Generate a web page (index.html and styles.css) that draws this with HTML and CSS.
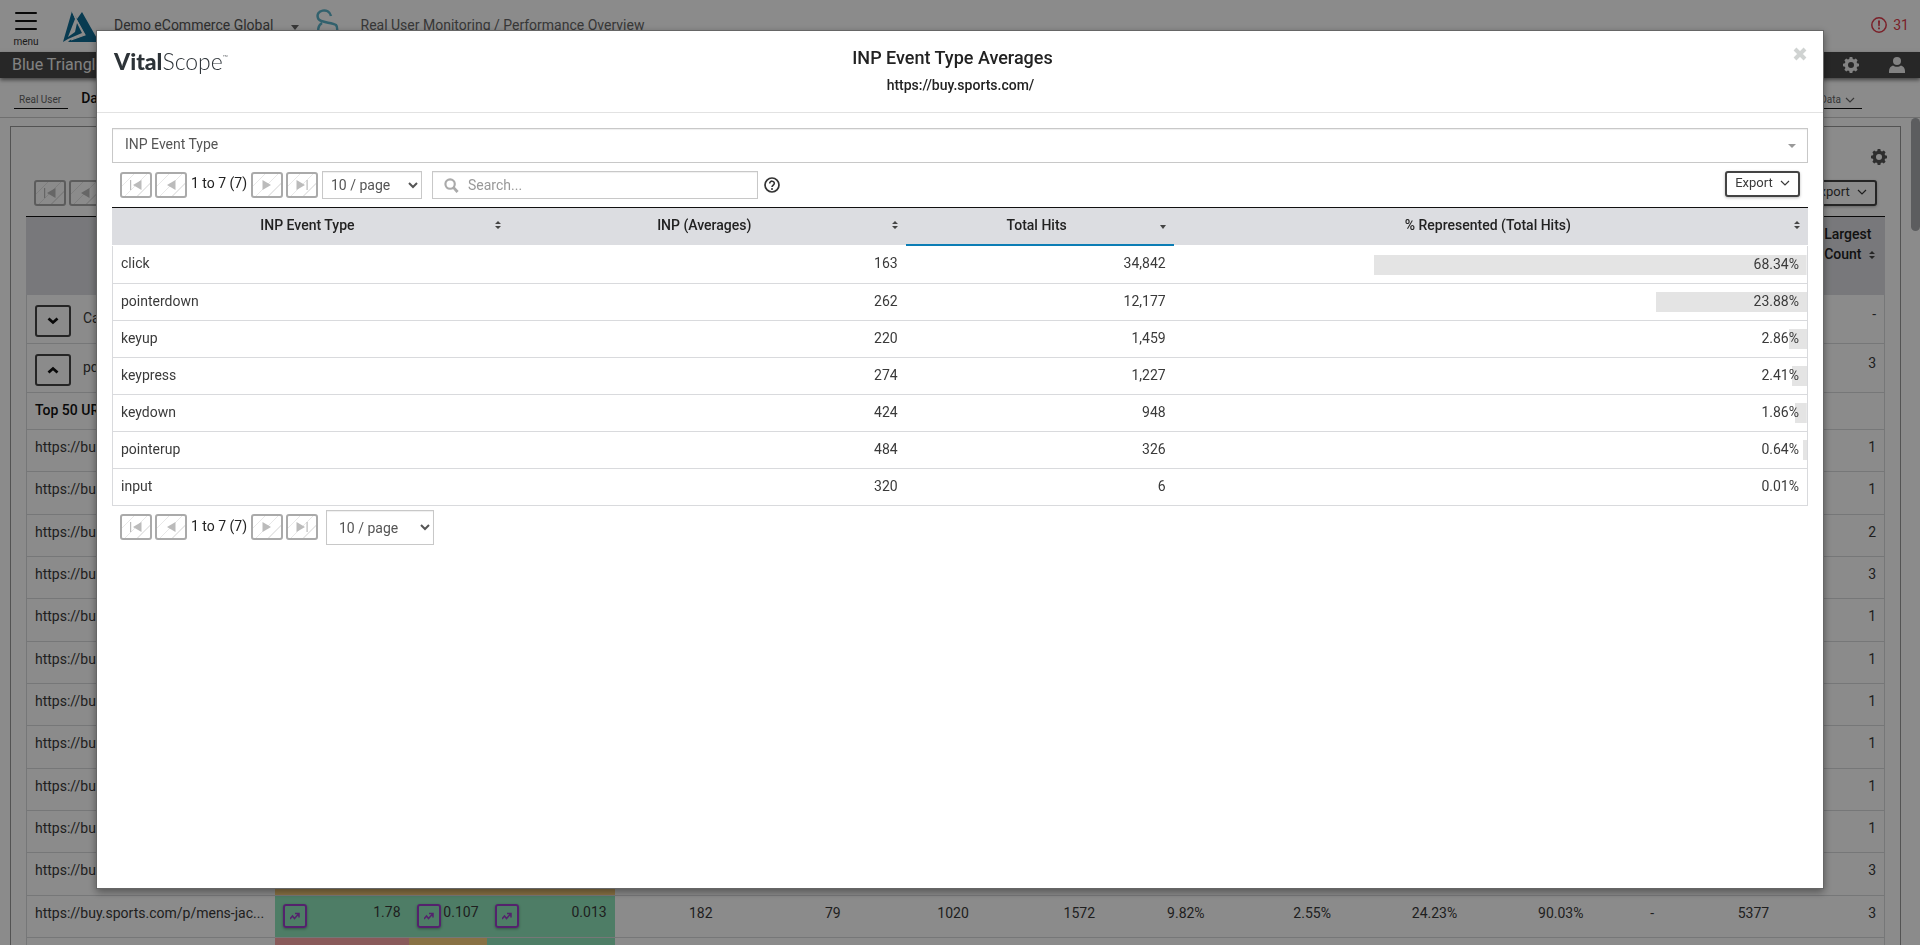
FILE: index.html
```html
<!DOCTYPE html>
<html lang="en">
<head>
<meta charset="utf-8">
<title>Performance Overview</title>
<link rel="stylesheet" href="styles.css">
</head>
<body>
<svg class="sprite" aria-hidden="true">
  <symbol id="first" viewBox="0 0 14 12"><path d="M1 1v10h1.200V1zM12.500 1v10L4 6z"/></symbol>
  <symbol id="prev" viewBox="0 0 14 12"><path d="M11.500 1v10L3 6z"/></symbol>
  <symbol id="next" viewBox="0 0 14 12"><path d="M2.500 1v10L11 6z"/></symbol>
  <symbol id="last" viewBox="0 0 14 12"><path d="M1.500 1v10L10 6zM11.500 1v10h1.200V1z"/></symbol>
  <symbol id="sort" viewBox="0 0 6 8"><path d="M3 0l3 3H0zM3 8l3-3H0z"/></symbol>
  <symbol id="chevron" viewBox="0 0 10 6"><path d="M1 1l4 4 4-4" fill="none" stroke="currentColor" stroke-width="1.200"/></symbol>
  <symbol id="fold" viewBox="0 0 12 8"><path d="M1.500 1.500L6 5.500l4.500-4" fill="none" stroke="currentColor" stroke-width="2.800"/></symbol>
  <symbol id="gear" viewBox="0 0 16 16"><path fill-rule="evenodd" d="M6.700 0h2.600l.5 1.900 1.300.5L12.800 1.400l1.800 1.800-1 1.700.5 1.300 1.900.5v2.600l-1.900.5-.5 1.300 1 1.700-1.800 1.800-1.700-1-1.300.5-.5 1.900H6.700l-.5-1.900-1.300-.5-1.700 1-1.800-1.800 1-1.700-.5-1.300L0 9.300V6.700l1.900-.5.5-1.300-1-1.700 1.800-1.800 1.700 1 1.300-.5zM8 5a3 3 0 1 0 0 6 3 3 0 0 0 0-6z"/></symbol>
  <symbol id="trend" viewBox="0 0 10 8"><path d="M0 7l2.500-3L4.500 6.500 8.500 2M5 1.500h4v4" fill="none" stroke="currentColor" stroke-width="1.500"/></symbol>
</svg>

<header class="top">
  <button class="menu"><span class="bars"><i></i><i></i><i></i></span>menu</button>
  <svg class="logo" viewBox="0 0 36 32" aria-hidden="true"><path d="M9 0l3 8L5 26l7-5 2-9 5 10-14 6-5 3z"/><path d="M11 3l11 21-15 5-2 2h31L19 1l-5 7z"/><path d="M9 0l4 8 9 16L8 29" stroke="#fff" stroke-width="1.200" fill="none"/></svg>
  <span class="site">Demo eCommerce Global</span>
  <i class="tri"></i>
  <svg class="cobra" viewBox="0 0 24 34" aria-hidden="true"><path fill="none" stroke="currentColor" stroke-width="2.500" d="M16 8C14-1 0 2 3 10c1 5 14 4 18 7 3 3 0 10 1 16M7 15c-5 3-4 8-3 17M11 24h6v8h-6z"/></svg>
  <span class="crumb">Real User Monitoring / Performance Overview</span>
  <span class="alerts"><svg viewBox="0 0 16 16" aria-hidden="true"><circle cx="8" cy="8" r="7.200" fill="none" stroke="currentColor" stroke-width="1.500"/><path d="M7 3.500h2L8.700 9.300H7.300zM7.100 10.500h1.800v1.800H7.100z"/></svg>31</span>
</header>
<div class="band"><span>Blue Triangle</span>
  <div class="band-icons"><svg viewBox="0 0 16 16"><use href="#gear"/></svg><svg viewBox="0 0 16 16"><circle cx="8" cy="4" r="4"/><path d="M0 16v-2c0-3 2-5 4-5.500 2 1.800 6 1.800 8 0 2 .5 4 2.500 4 5.500v2z"/></svg></div>
</div>
<nav class="sub"><a class="pick" href="#">Real User</a><strong>Dashboard</strong><a class="pick right" href="#">Filter Data <svg><use href="#chevron"/></svg></a></nav>

<main class="content">
  <section class="panel">
    <div class="panel-head"><svg viewBox="0 0 16 16"><use href="#gear"/></svg></div>
    <div class="tools">
      <button class="pg"><svg><use href="#first"/></svg></button>
      <button class="pg"><svg><use href="#prev"/></svg></button>
      <button class="export">Export <svg><use href="#chevron"/></svg></button>
    </div>
    <table class="grid back">
      <colgroup><col class="c-url"><col class="c-a"><col class="c-b"><col class="c-c"><col class="c-d"><col class="c-e"><col class="c-e"><col class="c-f"><col class="c-g"><col class="c-h"><col class="c-h"><col class="c-h"><col class="c-i"><col class="c-j"><col class="c-k"></colgroup>
      <thead><tr><th colspan="14"></th><th><span class="stack">Largest<br>Count <svg class="sort"><use href="#sort"/></svg></span></th></tr></thead>
      <tbody>
        <tr class="group"><td colspan="14"><span class="fold"><button><svg><use href="#fold"/></svg></button>Category</span></td><td>-</td></tr>
        <tr class="group"><td colspan="14"><span class="fold"><button><svg class="up"><use href="#fold"/></svg></button>pdp</span></td><td>3</td></tr>
        <tr class="label"><td colspan="14">Top 50 URLs</td><td></td></tr>
        <tr><td colspan="14">https://buy.sports.com/</td><td>1</td></tr>
        <tr><td colspan="14">https://buy.sports.com/</td><td>1</td></tr>
        <tr><td colspan="14">https://buy.sports.com/</td><td>2</td></tr>
        <tr><td colspan="14">https://buy.sports.com/</td><td>3</td></tr>
        <tr><td colspan="14">https://buy.sports.com/</td><td>1</td></tr>
        <tr><td colspan="14">https://buy.sports.com/</td><td>1</td></tr>
        <tr><td colspan="14">https://buy.sports.com/</td><td>1</td></tr>
        <tr><td colspan="14">https://buy.sports.com/</td><td>1</td></tr>
        <tr><td colspan="14">https://buy.sports.com/</td><td>1</td></tr>
        <tr><td colspan="14">https://buy.sports.com/</td><td>1</td></tr>
        <tr><td>https://buy.sports.com/</td><td class="warn" colspan="3"></td><td colspan="10"></td><td>3</td></tr>
        <tr><td>https://buy.sports.com/p/mens-jac...</td>
          <td class="good"><span class="metric"><button><svg><use href="#trend"/></svg></button>1.78</span></td>
          <td class="good"><span class="metric"><button><svg><use href="#trend"/></svg></button>0.107</span></td>
          <td class="good"><span class="metric"><button><svg><use href="#trend"/></svg></button>0.013</span></td>
          <td>182</td><td>79</td><td>1020</td><td>1572</td><td>9.82%</td><td>2.55%</td><td>24.23%</td><td>90.03%</td><td>-</td><td>5377</td><td>3</td></tr>
        <tr><td></td><td class="bad"></td><td class="warn"></td><td class="good"></td><td colspan="10"></td><td></td></tr>
      </tbody>
    </table>
  </section>
</main>
<div class="thumb"></div>

<div class="shade">
  <div class="modal" role="dialog" aria-labelledby="title">
    <header class="modal-head">
      <div class="brand"><b>Vital</b>Scope<sup>™</sup></div>
      <div class="titles"><h1 id="title">INP Event Type Averages</h1><p>https://buy.sports.com/</p></div>
      <button class="close" aria-label="Close"><svg viewBox="0 0 14 14"><path d="M2 2l10 10M12 2L2 12" stroke="currentColor" stroke-width="4" fill="none"/></svg></button>
    </header>
    <div class="modal-body">
      <button class="dimension">INP Event Type<i class="tri"></i></button>
      <div class="bar">
        <div class="pager">
          <button class="pg" aria-label="First"><svg><use href="#first"/></svg></button>
          <button class="pg" aria-label="Previous"><svg><use href="#prev"/></svg></button>
          <span>1 to 7 (7)</span>
          <button class="pg" aria-label="Next"><svg><use href="#next"/></svg></button>
          <button class="pg" aria-label="Last"><svg><use href="#last"/></svg></button>
        </div>
        <select class="size" aria-label="Rows per page"><option>10 / page</option></select>
        <label class="search"><svg viewBox="0 0 16 16"><circle cx="6.500" cy="6.500" r="5" fill="none" stroke="currentColor" stroke-width="2.300"/><path d="M10 10l4.500 5" stroke="currentColor" stroke-width="3"/></svg><input type="text" placeholder="Search..." aria-label="Search"></label>
        <svg class="help" viewBox="0 0 16 16"><circle cx="8" cy="8" r="7" fill="none" stroke="currentColor" stroke-width="1.700"/><path d="M5.700 6.500c0-3.200 4.700-3 4.600 0C10.300 8 8 8.200 8 10" fill="none" stroke="currentColor" stroke-width="1.600"/><circle cx="8" cy="12" r="1"/></svg>
        <button class="export">Export <svg><use href="#chevron"/></svg></button>
      </div>
      <table class="grid front">
        <colgroup><col class="f-name"><col class="f-name"><col class="f-hits"><col></colgroup>
        <thead><tr>
          <th><span class="th"><span>INP Event Type</span><svg class="sort"><use href="#sort"/></svg></span></th>
          <th><span class="th"><span>INP (Averages)</span><svg class="sort"><use href="#sort"/></svg></span></th>
          <th class="sorted"><span class="th"><span>Total Hits</span><svg class="sort" viewBox="0 0 6 8"><path d="M0 4h6L3 8z"/></svg></span></th>
          <th><span class="th"><span>% Represented (Total Hits)</span><svg class="sort"><use href="#sort"/></svg></span></th>
        </tr></thead>
        <tbody>
          <tr><td>click</td><td>163</td><td>34,842</td><td><div class="fill" style="--share:68.34%">68.34%</div></td></tr>
          <tr><td>pointerdown</td><td>262</td><td>12,177</td><td><div class="fill" style="--share:23.88%">23.88%</div></td></tr>
          <tr><td>keyup</td><td>220</td><td>1,459</td><td><div class="fill" style="--share:2.86%">2.86%</div></td></tr>
          <tr><td>keypress</td><td>274</td><td>1,227</td><td><div class="fill" style="--share:2.41%">2.41%</div></td></tr>
          <tr><td>keydown</td><td>424</td><td>948</td><td><div class="fill" style="--share:1.86%">1.86%</div></td></tr>
          <tr><td>pointerup</td><td>484</td><td>326</td><td><div class="fill" style="--share:0.64%">0.64%</div></td></tr>
          <tr><td>input</td><td>320</td><td>6</td><td><div class="fill" style="--share:0.01%">0.01%</div></td></tr>
        </tbody>
      </table>
      <div class="bar foot">
        <div class="pager">
          <button class="pg" aria-label="First"><svg><use href="#first"/></svg></button>
          <button class="pg" aria-label="Previous"><svg><use href="#prev"/></svg></button>
          <span>1 to 7 (7)</span>
          <button class="pg" aria-label="Next"><svg><use href="#next"/></svg></button>
          <button class="pg" aria-label="Last"><svg><use href="#last"/></svg></button>
        </div>
        <select class="size" aria-label="Rows per page"><option>10 / page</option></select>
      </div>
    </div>
  </div>
</div>
</body>
</html>
```
FILE: styles.css
```css
* { box-sizing: border-box; }
body { margin: 0; height: 100vh; overflow: hidden; display: flex; flex-direction: column; background: #fff; color: #3a3a3a; font: 14px/20px Roboto, sans-serif; }
button, select, input { font: inherit; color: inherit; margin: 0; }
button { background: none; border: 0; padding: 0; cursor: pointer; }
svg { fill: currentColor; flex: none; }
.sprite { display: none; }
.tri { border: 4px solid transparent; border-top: 5px solid currentColor; border-bottom: 0; }

.top { display: flex; align-items: flex-start; height: 52px; padding: 0 11px 0 12px; flex: none; font-size: 14px; color: #666; }
.menu { width: 28px; margin-right: 23px; padding-top: 12px; font-size: 10px; line-height: 12px; color: #333; text-align: center; }
.bars { display: flex; flex-direction: column; gap: 6px; margin: 0 3px 6px; }
.bars i { height: 2px; border-radius: 1px; background: #111; }
.logo { width: 36px; height: 32px; margin: 11px 15px 0 0; color: #106c95; }
.site, .crumb { margin-top: 15px; }
.site { color: #555; }
.top .tri { margin: 25px 16px 0 17px; }
.cobra { width: 24px; height: 34px; margin: 8px 22px 0 0; color: #5cb3c9; }
.alerts { display: flex; gap: 6px; align-items: center; margin: 15px 0 0 auto; color: #e03b4b; }
.alerts svg { width: 16px; height: 16px; }
.band { display: flex; justify-content: space-between; align-items: center; height: 26px; padding: 0 15px 0 12px; flex: none; background: #484848; color: #eee; font-size: 16px; box-shadow: 0 2px 4px #0008; position: relative; }
.band-icons { display: flex; gap: 30px; }
.band-icons svg { width: 16px; height: 16px; }
.sub { display: flex; align-items: flex-start; height: 40px; padding: 10px 58px 0 14px; flex: none; border-bottom: 1px solid #ccc; font-size: 14px; }
.pick { display: flex; align-items: center; gap: 4px; height: 21px; padding: 4px 7px 0 5px; border-bottom: 1px solid #111; color: #666; font-size: 10px; text-decoration: none; }
.sub strong { margin-left: 13px; font-weight: 500; color: #111; }
.pick.right { margin-left: auto; }
.pick svg { width: 10px; height: 6px; }

.content { flex: 1; min-height: 0; overflow: hidden; padding: 8px 19px 0 10px; }
.panel { border: 1px solid #999; border-bottom: 0; padding: 0 15px; height: 100%; overflow: hidden; }
.panel-head { display: flex; justify-content: flex-end; margin-right: -2px; padding-top: 22px; height: 53px; color: #555; }
.panel-head svg { width: 16px; height: 16px; }
.tools { display: flex; gap: 3px; height: 36px; padding: 0 8px; }
.pg { display: flex; align-items: center; justify-content: center; width: 32px; height: 26px; border: 2px solid #aaa; border-radius: 3px; color: #bbb; background: repeating-linear-gradient(135deg, #fff 0 8px, #e8e8e8 8px 9px); }
.pg svg { width: 14px; height: 12px; }
.export { display: flex; align-items: center; justify-content: center; gap: 7px; width: 75px; height: 26px; margin-left: auto; padding-bottom: 2px; border: 2px solid #444; border-radius: 3px; font-size: 13px; background: #fff; box-shadow: 0 1px 3px #0004; }
.export svg { width: 10px; height: 6px; }

.grid { width: 100%; table-layout: fixed; border-collapse: separate; border-spacing: 0; border-top: 1px solid #111; }
.grid th { background: #dcdde1; color: #222; font-weight: 500; padding: 0 8px; }
.grid td { padding: 0 8px; text-align: right; border-bottom: 1px solid #d9dadd; }
.grid td:first-child { text-align: left; border-left: 1px solid #d9dadd; }
.grid td:last-child { border-right: 1px solid #d9dadd; }
.sort { width: 6px; height: 8px; color: #444; }
.back th { height: 78px; padding: 7px 10px 0; vertical-align: top; text-align: right; white-space: nowrap; }
.stack { display: inline-block; text-align: left; }
.back th .sort { margin-left: 4px; }
.back td { height: 42px; padding-bottom: 8px; overflow: hidden; white-space: nowrap; }
.back tr:nth-child(3n+2) td { height: 43px; }
.back .group:nth-child(n) td { height: 49px; padding-bottom: 10px; }
.back .group:nth-child(n) td:first-child { padding-bottom: 3px; }
.back .label:nth-child(n) td { height: 37px; padding: 0 8px 2px; font-weight: 500; color: #111; }
.fold { display: inline-flex; align-items: center; gap: 12px; line-height: 30px; }
.fold button { display: flex; align-items: center; justify-content: center; width: 36px; height: 32px; margin-top: 6px; border: 2px solid #444; border-radius: 3px; color: #111; }
.fold svg { width: 12px; height: 8px; }
.up { transform: rotate(180deg); }
.c-url { width: 13.4%; } .c-a { width: 7.2%; } .c-b { width: 4.2%; } .c-c { width: 6.9%; }
.c-d { width: 5.7%; } .c-e { width: 6.9%; } .c-f { width: 6.8%; } .c-g { width: 5.9%; }
.c-h { width: 6.8%; } .c-i { width: 3.8%; } .c-j { width: 6.2%; } .c-k { width: 5.8%; }
.back .good { background: #8fe6bb; }
.back .warn { background: #fad07d; }
.back .bad { background: #fca5a5; }
.back .good { padding-bottom: 4px; }
.metric { display: flex; justify-content: space-between; line-height: 20px; }
.metric button { display: flex; align-items: center; justify-content: center; width: 24px; height: 24px; margin-top: 2px; border: 2px solid #9b3fc8; border-radius: 3px; color: #9b3fc8; box-shadow: 0 1px 3px #0005; }
.metric svg { width: 10px; height: 8px; }
.thumb { position: absolute; right: 0; top: 118px; width: 9px; height: 113px; border-radius: 5px; background: #a9abae; }

.shade { position: fixed; inset: 0; padding: 30px 96px 56px; background: #00000074; display: flex; }
.modal { flex: 1; border: 1px solid #666; background: #fff; box-shadow: 0 3px 8px #0006; }
.modal-head { display: grid; grid-template-columns: 1fr auto 1fr; align-items: start; height: 82px; padding: 16px 16px 0 17px; border-bottom: 1px solid #e2e2e2; }
.brand { font: 300 23px/28px Lato, sans-serif; color: #2d3338; }
.brand b { font-weight: 900; }
.brand sup { font-size: 7px; line-height: 7px; vertical-align: 10px; }
.titles { text-align: center; color: #222; }
.titles h1 { margin: 0 16px 6px 0; font-size: 18px; line-height: 22px; font-weight: 500; }
.titles p { margin: 0; font-size: 14px; line-height: 20px; font-weight: 500; }
.close { justify-self: end; width: 14px; height: 14px; color: #d0d3d2; }
.close svg { display: block; }
.modal-body { padding: 15px 15px 0; }
.dimension { display: flex; justify-content: space-between; align-items: center; width: 100%; height: 35px; padding: 0 11px 3px 12px; border: 1px solid #c8c8c8; box-shadow: inset 0 1px 1px #0001; color: #555; }
.dimension .tri { color: #999; border-top-width: 4px; margin-top: 3px; }
.bar { display: flex; align-items: flex-start; padding: 8px 8px 0; height: 44px; }
.pager { display: flex; gap: 3px; }
.pager { padding-top: 1px; }
.pager span { width: 58px; line-height: 22px; text-align: center; white-space: nowrap; color: #222; }
.size { height: 28px; width: 100px; margin-left: 4px; padding: 0 4px; border: 1px solid #c8c8c8; background: #fff; color: #555; box-shadow: inset 0 1px 1px #0001; }
.search { display: flex; align-items: center; gap: 9px; height: 28px; width: 326px; margin-left: 10px; padding: 0 11px; border: 1px solid #c8c8c8; color: #aaa; box-shadow: inset 0 1px 1px #0001; }
.search svg { width: 15px; height: 15px; }
.search input { flex: 1; min-width: 0; border: 0; outline: 0; padding: 0; color: #333; }
.search input::placeholder { color: #999; }
.help { width: 16px; height: 16px; margin: 6px 0 0 6px; color: #333; }
.front th { height: 38px; border-bottom: 1px solid #fff; }
.front .sorted { border-bottom: 2px solid #0b7db5; }
.th { display: flex; align-items: center; padding-bottom: 3px; }
.th > span { flex: 1; }
.front td { height: 37px; padding-bottom: 3px; }
.front tbody tr:first-child td { height: 38px; }
.front tr td:last-child { padding: 0; }
.f-name { width: 23.4%; } .f-hits { width: 15.8%; }
.fill { padding: 0 8px 2px; line-height: 18px; background: linear-gradient(#e4e4e4, #e4e4e4) right / var(--share) 100% no-repeat; }
.foot { padding-top: 4px; }
.foot .pager { padding-top: 4px; }
.foot .pager span { line-height: 24px; }
.foot .size { height: 35px; width: 108px; margin-left: 8px; padding: 0 8px; }
```
